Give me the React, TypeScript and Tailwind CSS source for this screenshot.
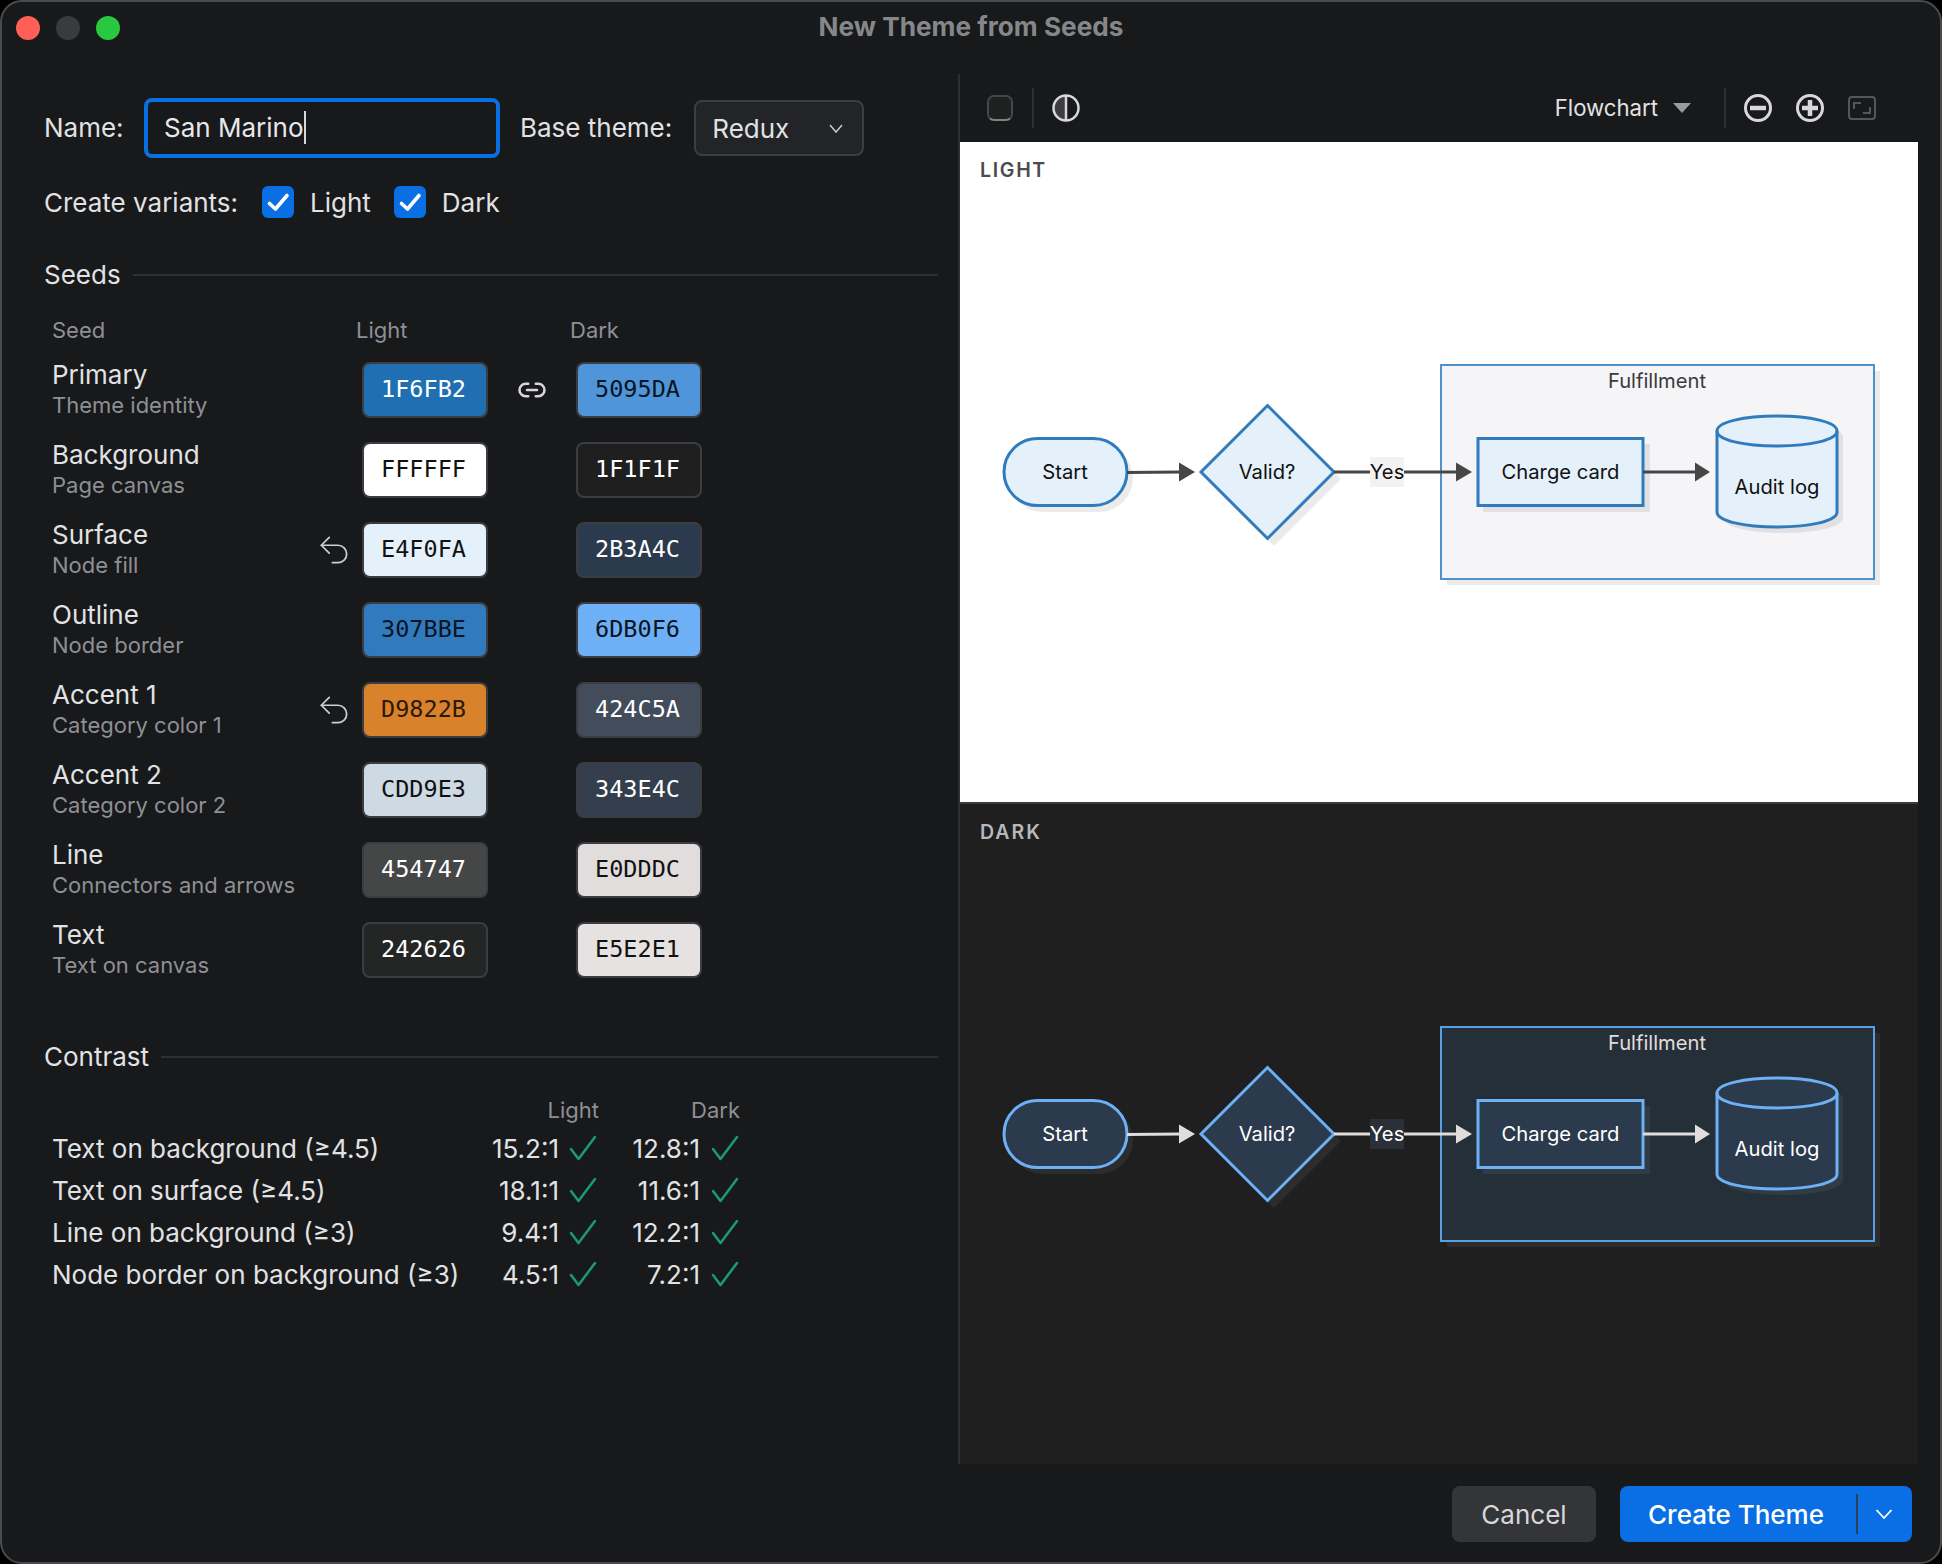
import React from "react";

const rows = [
  ["Primary", "Theme identity", "1F6FB2", "5095DA", "#1F6FB2", "#5095DA", "#ffffff", "#0b1420"],
  ["Background", "Page canvas", "FFFFFF", "1F1F1F", "#FFFFFF", "#1F1F1F", "#111111", "#ffffff"],
  ["Surface", "Node fill", "E4F0FA", "2B3A4C", "#E4F0FA", "#2B3A4C", "#111111", "#ffffff"],
  ["Outline", "Node border", "307BBE", "6DB0F6", "#307BBE", "#6DB0F6", "#0b1420", "#0b1420"],
  ["Accent 1", "Category color 1", "D9822B", "424C5A", "#D9822B", "#424C5A", "#2a1a08", "#ffffff"],
  ["Accent 2", "Category color 2", "CDD9E3", "343E4C", "#CDD9E3", "#343E4C", "#111111", "#ffffff"],
  ["Line", "Connectors and arrows", "454747", "E0DDDC", "#454747", "#E0DDDC", "#ffffff", "#111111"],
  ["Text", "Text on canvas", "242626", "E5E2E1", "#242626", "#E5E2E1", "#ffffff", "#111111"],
];

const contrast = [
  ["Text on background (≥4.5)", "15.2:1", "12.8:1"],
  ["Text on surface (≥4.5)", "18.1:1", "11.6:1"],
  ["Line on background (≥3)", "9.4:1", "12.2:1"],
  ["Node border on background (≥3)", "4.5:1", "7.2:1"],
];

function Undo() {
  return (
    <svg width="38" height="38" viewBox="0 0 24 24" fill="none" stroke="#d0d0d2" strokeWidth="1.1" strokeLinecap="round" strokeLinejoin="round">
      <path d="M9 14 4 9l5-5" />
      <path d="M4 9h10.5a5.5 5.5 0 0 1 5.5 5.5a5.5 5.5 0 0 1-5.5 5.5H11" />
    </svg>
  );
}

function LinkIcon() {
  return (
    <svg width="30" height="30" viewBox="0 0 24 24" fill="none" stroke="#d8d8da" strokeWidth="2" strokeLinecap="round" strokeLinejoin="round">
      <path d="M9 17H7A5 5 0 0 1 7 7h2" />
      <path d="M15 7h2a5 5 0 1 1 0 10h-2" />
      <line x1="8" y1="12" x2="16" y2="12" />
    </svg>
  );
}

function Tick() {
  return (
    <svg width="28" height="28" viewBox="0 0 28 28" fill="none" stroke="#1a9c70" strokeWidth="2.5" strokeLinecap="round" strokeLinejoin="round" className="shrink-0">
      <path d="M2 15 L9.5 25 L26 3" />
    </svg>
  );
}

function Box({ label }: { label: string }) {
  return (
    <div className="flex items-center gap-[16px]">
      <span className="flex h-[32px] w-[32px] items-center justify-center rounded-[6px] bg-[#0a6fe4]">
        <svg width="32" height="32" viewBox="0 0 32 32" fill="none" stroke="#ffffff" strokeWidth="3.6" strokeLinecap="round" strokeLinejoin="round">
          <path d="M7.5 17.5 L13.5 23 L25 9.5" />
        </svg>
      </span>
      <span>{label}</span>
    </div>
  );
}

function Chip({ text, bg, fg }: { text: string; bg: string; fg: string }) {
  return (
    <div
      className="flex h-[56px] w-[126px] items-center justify-center rounded-[8px] border-2 border-[#3c3d42] pr-[3px] text-[23.5px] leading-none font-['DejaVu_Sans_Mono',monospace]"
      style={{ backgroundColor: bg, color: fg }}
    >
      {text}
    </div>
  );
}

function SectionTitle({ title }: { title: string }) {
  return (
    <div className="flex items-center gap-[12px] text-[26px] leading-[32px] text-[#e2e2e4]">
      <span>{title}</span>
      <div className="h-[2px] flex-1 bg-[#2e2f33]" />
    </div>
  );
}

function Diagram({
  line,
  stroke,
  fill,
  groupFill,
  groupStroke,
  text,
  groupText,
  shadow,
  labelBg,
}: {
  line: string;
  stroke: string;
  fill: string;
  groupFill: string;
  groupStroke: string;
  text: string;
  groupText: string;
  shadow: string;
  labelBg: string;
}) {
  const font = { fontFamily: "Inter, sans-serif", fontSize: 20.2 };
  const cyl =
    "M1717 431 C1717 422 1744 416 1777 416 C1810 416 1837 422 1837 431 L1837 512 C1837 521 1810 527 1777 527 C1744 527 1717 521 1717 512 Z";
  return (
    <svg className="block h-[604px] w-[958px]" viewBox="960 198 958 604">
      <rect x="1447" y="371" width="433" height="214" fill={shadow} />
      <rect x="1441" y="365" width="433" height="214" fill={groupFill} stroke={groupStroke} strokeWidth="2" />
      <text x="1657" y="388" textAnchor="middle" fill={groupText} style={font}>
        Fulfillment
      </text>

      <rect x="1009" y="444" width="124" height="68" rx="34" fill={shadow} />
      <rect x="1004" y="438.5" width="123" height="67" rx="33.5" fill={fill} stroke={stroke} strokeWidth="3" />
      <text x="1065" y="479" textAnchor="middle" fill={text} style={font}>
        Start
      </text>

      <line x1="1127" y1="472.5" x2="1181" y2="472" stroke={line} strokeWidth="3" />
      <path d="M1179 462.5 L1195 472 L1179 481.5 Z" fill={line} />

      <path d="M1274 412 L1341 479 L1274 546 L1207 479 Z" fill={shadow} />
      <path d="M1267.5 405.5 L1334 472 L1267.5 538.5 L1201 472 Z" fill={fill} stroke={stroke} strokeWidth="3" />
      <text x="1267" y="479" textAnchor="middle" fill={text} style={font}>
        Valid?
      </text>

      <line x1="1334" y1="472" x2="1460" y2="472" stroke={line} strokeWidth="3" />
      <rect x="1370" y="457" width="34" height="30" fill={labelBg} />
      <text x="1387" y="479" textAnchor="middle" fill={text} style={font}>
        Yes
      </text>
      <path d="M1456 462.5 L1472 472 L1456 481.5 Z" fill={line} />

      <rect x="1483" y="444" width="167" height="68" fill={shadow} />
      <rect x="1478" y="438.5" width="165" height="67" fill={fill} stroke={stroke} strokeWidth="3" />
      <text x="1560.5" y="479" textAnchor="middle" fill={text} style={font}>
        Charge card
      </text>

      <line x1="1643" y1="472" x2="1697" y2="472" stroke={line} strokeWidth="3" />
      <path d="M1695 462.5 L1710 472 L1695 481.5 Z" fill={line} />

      <path d={cyl} fill={shadow} transform="translate(6 6)" />
      <path d={cyl} fill={fill} stroke={stroke} strokeWidth="3" />
      <path d="M1717 431 C1717 440 1744 446 1777 446 C1810 446 1837 440 1837 431" fill="none" stroke={stroke} strokeWidth="3" />
      <text x="1777" y="494" textAnchor="middle" fill={text} style={font}>
        Audit log
      </text>
    </svg>
  );
}

export default function App() {
  return (
    <div className="h-[1564px] w-[1942px] bg-black font-['Inter',sans-serif]">
      <div className="flex h-full w-full flex-col overflow-hidden rounded-[22px] border-2 border-[#4a4b4e] bg-[#18191b] text-[#e2e2e4]">
        {/* title bar */}
        <div className="relative flex h-[72px] shrink-0 items-center justify-center">
          <div className="absolute left-[14px] top-[14px] flex gap-[16px]">
            <span className="h-[24px] w-[24px] rounded-full bg-[#ff5f57]" />
            <span className="h-[24px] w-[24px] rounded-full bg-[#3a3b3e]" />
            <span className="h-[24px] w-[24px] rounded-full bg-[#28c840]" />
          </div>
          <span className="-mt-[22px] text-[26.2px] font-bold text-[#86878a]">New Theme from Seeds</span>
        </div>

        {/* main */}
        <div className="flex h-[1390px] shrink-0">
          {/* left */}
          <div className="w-[958px] shrink-0 border-r-2 border-[#2e2f33] pl-[42px] pr-[20px]">
            <div className="mt-[24px] flex h-[60px] items-center text-[26px]">
              <span className="w-[100px] pb-[2px]">Name:</span>
              <div className="flex h-[60px] w-[356px] items-center rounded-[8px] border-[4px] border-[#0a6fe4] pb-[2px] pl-[16px] text-[#e8e8ea]">
                San Marino
                <span className="ml-[1px] h-[33px] w-[2px] bg-[#d8d8da]" />
              </div>
              <span className="ml-[20px] pb-[2px]">Base theme:</span>
              <div className="ml-[22px] flex h-[56px] w-[170px] items-center justify-between rounded-[8px] border-2 border-[#3c3d42] bg-[#232428] pl-[16px] pr-[16px]">
                <span>Redux</span>
                <svg width="20" height="20" viewBox="0 0 20 20" fill="none" stroke="#c8c8ca" strokeWidth="1.5">
                  <path d="M4 7 L10 14 L16 7" />
                </svg>
              </div>
            </div>
            <div className="mt-[22px] flex h-[44px] items-center text-[26px]">
              <span className="w-[218px]">Create variants:</span>
              <Box label="Light" />
              <div className="w-[23px]" />
              <Box label="Dark" />
            </div>

            <div className="mt-[35px]">
              <SectionTitle title="Seeds" />
            </div>

            <div className="mt-[24px] flex h-[30px] items-center pl-[8px] text-[22px] text-[#8e9095]">
              <span className="w-[304px]">Seed</span>
              <span className="w-[214px]">Light</span>
              <span>Dark</span>
            </div>

            <div className="mt-[5px] pl-[8px]">
              {rows.map((r) => (
                <div key={r[0]} className="flex h-[80px] items-center">
                  <div className="w-[261px] shrink-0 pb-[3px]">
                    <div className="text-[26px] leading-[33px] text-[#e2e2e4]">{r[0]}</div>
                    <div className="text-[22px] leading-[28px] text-[#8e9095]">{r[1]}</div>
                  </div>
                  <div className="flex w-[49px] shrink-0 items-center pl-[2px]">
                    {(r[0] === "Surface" || r[0] === "Accent 1") && <Undo />}
                  </div>
                  <Chip text={r[2]} bg={r[4]} fg={r[6]} />
                  <div className="flex w-[88px] shrink-0 items-center justify-center">
                    {r[0] === "Primary" && <LinkIcon />}
                  </div>
                  <Chip text={r[3]} bg={r[5]} fg={r[7]} />
                </div>
              ))}
            </div>

            <div className="mt-[51px]">
              <SectionTitle title="Contrast" />
            </div>

            <div className="mt-[22px] flex h-[30px] items-center justify-end pr-[198px] text-[22px] text-[#8e9095]">
              <span className="w-[60px] text-right">Light</span>
              <span className="w-[141px] text-right">Dark</span>
            </div>
            <div className="mt-[2px] pl-[8px]">
              {contrast.map((c) => (
                <div key={c[0]} className="flex h-[42px] items-center text-[26px] text-[#e2e2e4]">
                  <span className="w-[455px]">{c[0]}</span>
                  <span className="flex w-[52px] justify-end whitespace-nowrap">{c[1]}</span>
                  <span className="ml-[10px]"><Tick /></span>
                  <span className="ml-[21px] flex w-[82px] justify-end whitespace-nowrap">{c[2]}</span>
                  <span className="ml-[11px]"><Tick /></span>
                </div>
              ))}
            </div>
          </div>

          {/* right */}
          <div className="flex w-[958px] shrink-0 flex-col">
            <div className="flex h-[68px] shrink-0 items-center pl-[27px] pr-[42px]">
              <span className="h-[26px] w-[26px] rounded-[7px] border-2 border-[#45464a] border-b-[#808185] bg-[#1e211f]" />
              <div className="ml-[19px] h-[40px] w-[2px] bg-[#2e2f33]" />
              <svg className="ml-[18px]" width="28" height="28" viewBox="0 0 28 28">
                <path d="M14 1.5 A12.5 12.5 0 0 0 14 26.5 Z" fill="#3c3d40" />
                <circle cx="14" cy="14" r="12.5" fill="none" stroke="#d8d8da" strokeWidth="2.5" />
                <line x1="14" y1="1.5" x2="14" y2="26.5" stroke="#d8d8da" strokeWidth="2.5" />
              </svg>
              <div className="ml-auto flex items-center gap-[14px] text-[22.2px] text-[#e2e2e4]">
                <span>Flowchart</span>
                <svg width="20" height="12" viewBox="0 0 20 12">
                  <path d="M1 1 H19 L10 11 Z" fill="#9a9b9e" />
                </svg>
              </div>
              <div className="ml-[32px] h-[40px] w-[2px] bg-[#2e2f33]" />
              <svg className="ml-[18px]" width="28" height="28" viewBox="0 0 28 28" fill="none" stroke="#d8d8da" strokeWidth="3">
                <circle cx="14" cy="14" r="12.5" />
                <line x1="6" y1="14" x2="22" y2="14" strokeWidth="4.5" />
              </svg>
              <svg className="ml-[24px]" width="28" height="28" viewBox="0 0 28 28" fill="none" stroke="#d8d8da" strokeWidth="3">
                <circle cx="14" cy="14" r="12.5" />
                <line x1="6" y1="14" x2="22" y2="14" strokeWidth="4.5" />
                <line x1="14" y1="6" x2="14" y2="22" strokeWidth="4.5" />
              </svg>
              <svg className="ml-[24px]" width="28" height="24" viewBox="0 0 28 24" fill="none" stroke="#55565a" strokeWidth="2">
                <rect x="1" y="1" width="26" height="22" rx="3" />
                <path d="M6 13 V7 H13" />
                <path d="M22 11 V17 H15" />
              </svg>
            </div>

            <div className="h-[660px] shrink-0 bg-white">
              <div className="flex h-[56px] items-center pl-[20px] pt-[1px] text-[19.5px] font-semibold tracking-[1.7px] text-[#4a4b4d]">LIGHT</div>
              <Diagram
                line="#454747"
                stroke="#307BBE"
                fill="#E4F0FA"
                groupFill="#F5F5F7"
                groupStroke="#5090CC"
                text="#111111"
                groupText="#3a3b3d"
                shadow="rgba(0,0,0,0.08)"
                labelBg="#F3F2F3"
              />
            </div>
            <div className="h-[2px] shrink-0 bg-[#3a3b3e]" />
            <div className="h-[660px] shrink-0 bg-[#1F1F1F]">
              <div className="flex h-[56px] items-center pl-[20px] pt-[1px] text-[19.5px] font-semibold tracking-[2px] text-[#b8b8ba]">DARK</div>
              <Diagram
                line="#E0DDDC"
                stroke="#6DB0F6"
                fill="#2B3A4C"
                groupFill="#242F38"
                groupStroke="#5A9FE5"
                text="#ffffff"
                groupText="#E0DDDC"
                shadow="rgba(255,255,255,0.06)"
                labelBg="#2B2F38"
              />
            </div>
          </div>
        </div>

        {/* footer */}
        <div className="flex flex-1 items-start justify-end gap-[24px] pr-[28px] pt-[22px]">
          <div className="flex h-[56px] w-[144px] items-center justify-center rounded-[8px] bg-[#343538] text-[26px] text-[#d8d8da]">Cancel</div>
          <div className="flex h-[56px] w-[292px] items-center rounded-[8px] bg-[#0a6fe4] text-[26px] font-medium text-white">
            <span className="w-[232px] text-center">Create Theme</span>
            <div className="ml-[4px] h-[40px] w-[2px] bg-[#2a3f5c]" />
            <div className="flex flex-1 items-center justify-center pr-[2px]">
              <svg width="20" height="20" viewBox="0 0 20 20" fill="none" stroke="#ffffff" strokeWidth="1.8">
                <path d="M2.5 6 L10 14 L17.5 6" />
              </svg>
            </div>
          </div>
        </div>
      </div>
    </div>
  );
}
